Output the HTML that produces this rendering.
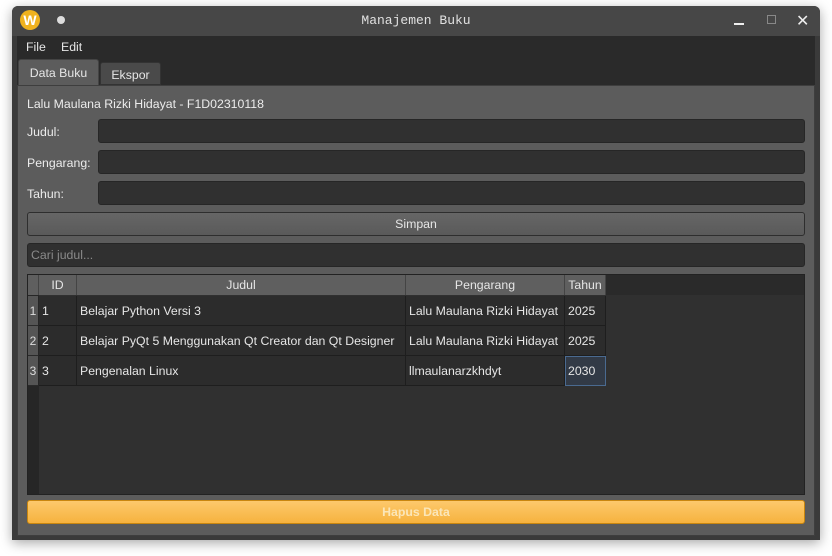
<!DOCTYPE html>
<html><head><style>
*{box-sizing:border-box;margin:0;padding:0}
body{width:832px;height:556px;background:#fff;font-family:"Liberation Sans","Noto Sans CJK JP",sans-serif;font-size:12.3px;color:#e6e6e6;position:relative;overflow:hidden}
.a{position:absolute}
.win{left:12px;top:6px;width:808px;height:534px;background:#3a3a3a;border-radius:6px 6px 0 0;box-shadow:0 3px 12px rgba(0,0,0,.35)}
.title{left:12px;top:6px;width:808px;height:30px;background:#474747;border-radius:6px 6px 0 0}
.menu{left:17px;top:36px;width:798px;height:21px;background:#2a2a2a}
.tabbar{left:17px;top:57px;width:798px;height:29px;background:#2a2a2a}
.pane{left:17px;top:85px;width:798px;height:451px;background:#5c5c5c;border:1px solid #3e3e3e}
.inp{background:#303030;border:1px solid #262626;border-radius:3px}
.lbl{color:#ececec}
.tbl{left:27px;top:274px;width:778px;height:221px;background:#303030;border:1px solid #222}
.cell{position:absolute;border-right:1px solid #1e1e1e;border-bottom:1px solid #1e1e1e;background:#2c2c2c;line-height:30px;padding-left:3px;white-space:nowrap}
.hd{position:absolute;background:#5f5f5f;border-right:1px solid #444;text-align:center;line-height:21px;color:#e6e6e6;height:20px}
.vh{position:absolute;left:0;width:10px;background:#555;border-bottom:1px solid #2a2a2a;line-height:30px;text-align:center;font-size:12px;color:#ddd}
</style></head><body>
<div class="a win"></div>
<div class="a title"></div>
<div class="a" style="left:20px;top:10px;width:20px;height:20px;border-radius:50%;background:#f0b21e"></div>
<div class="a" style="left:20px;top:10px;width:20px;height:20px;text-align:center;line-height:20px;font-weight:bold;color:#fff;font-size:14px">W</div>
<div class="a" style="left:57px;top:16px;width:8px;height:8px;border-radius:50%;background:#ddd"></div>
<div class="a" style="left:0;top:13px;width:832px;text-align:center;font-family:'Liberation Mono',monospace;font-size:13px;color:#e0e0e0">Manajemen Buku</div>
<div class="a" style="left:734px;top:23px;width:10px;height:2px;background:#eee"></div>
<div class="a" style="left:767px;top:15px;width:9px;height:9px;border:1.5px solid #888"></div>
<div class="a" style="left:796px;top:11px;color:#eee;font-size:16px">✕</div>
<div class="a menu"></div>
<div class="a" style="left:26px;top:40px">File</div>
<div class="a" style="left:61px;top:40px">Edit</div>
<div class="a tabbar"></div>
<div class="a" style="left:18px;top:59px;width:81px;height:28px;background:#5c5c5c;border:1px solid #444;border-bottom:none;border-radius:3px 3px 0 0;text-align:center;line-height:26px">Data Buku</div>
<div class="a" style="left:100px;top:62px;width:61px;height:23px;background:#4a4a4a;border:1px solid #333;border-radius:3px 3px 0 0;text-align:center;line-height:24px">Ekspor</div>
<div class="a pane"></div>
<div class="a lbl" style="left:27px;top:97px">Lalu Maulana Rizki Hidayat - F1D02310118</div>
<div class="a lbl" style="left:27px;top:125px">Judul:</div>
<div class="a lbl" style="left:27px;top:156px">Pengarang:</div>
<div class="a lbl" style="left:27px;top:187px">Tahun:</div>
<div class="a inp" style="left:98px;top:119px;width:707px;height:24px"></div>
<div class="a inp" style="left:98px;top:150px;width:707px;height:24px"></div>
<div class="a inp" style="left:98px;top:181px;width:707px;height:24px"></div>
<div class="a" style="left:27px;top:212px;width:778px;height:24px;background:linear-gradient(#666,#5a5a5a);border:1px solid #2e2e2e;border-radius:3px;text-align:center;line-height:23px">Simpan</div>
<div class="a inp" style="left:27px;top:243px;width:778px;height:24px;color:#8a8a8a;padding-left:3px;line-height:23px">Cari judul...</div>
<div class="a tbl">
<div class="a" style="left:0;top:0;width:776px;height:20px;background:#2a2a2a"></div>
<div class="hd" style="left:0;width:11px"></div>
<div class="hd" style="left:11px;width:38px">ID</div>
<div class="hd" style="left:49px;width:329px">Judul</div>
<div class="hd" style="left:378px;width:159px">Pengarang</div>
<div class="hd" style="left:537px;width:41px">Tahun</div>
<div class="a" style="left:0;top:20px;width:11px;height:199px;background:#262626"></div>
<div class="vh" style="top:21px;height:30px">1</div>
<div class="vh" style="top:51px;height:30px">2</div>
<div class="vh" style="top:81px;height:30px">3</div>
<div class="cell" style="left:11px;top:21px;width:38px;height:30px">1</div>
<div class="cell" style="left:49px;top:21px;width:329px;height:30px">Belajar Python Versi 3</div>
<div class="cell" style="left:378px;top:21px;width:159px;height:30px">Lalu Maulana Rizki Hidayat</div>
<div class="cell" style="left:537px;top:21px;width:41px;height:30px">2025</div>
<div class="cell" style="left:11px;top:51px;width:38px;height:30px">2</div>
<div class="cell" style="left:49px;top:51px;width:329px;height:30px">Belajar PyQt 5 Menggunakan Qt Creator dan Qt Designer</div>
<div class="cell" style="left:378px;top:51px;width:159px;height:30px">Lalu Maulana Rizki Hidayat</div>
<div class="cell" style="left:537px;top:51px;width:41px;height:30px">2025</div>
<div class="cell" style="left:11px;top:81px;width:38px;height:30px">3</div>
<div class="cell" style="left:49px;top:81px;width:329px;height:30px">Pengenalan Linux</div>
<div class="cell" style="left:378px;top:81px;width:159px;height:30px">llmaulanarzkhdyt</div>
<div class="cell" style="left:537px;top:81px;width:41px;height:30px;background:#323a46;border:1px solid #4a6a90;padding-left:2px;line-height:28px">2030</div>
</div>
<div class="a" style="left:27px;top:500px;width:778px;height:24px;background:linear-gradient(#fdc96c,#f6b23e);border:1px solid #c9860f;border-radius:3px;text-align:center;line-height:23px;color:#fbe6b8;font-weight:bold">Hapus Data</div>
</body></html>
